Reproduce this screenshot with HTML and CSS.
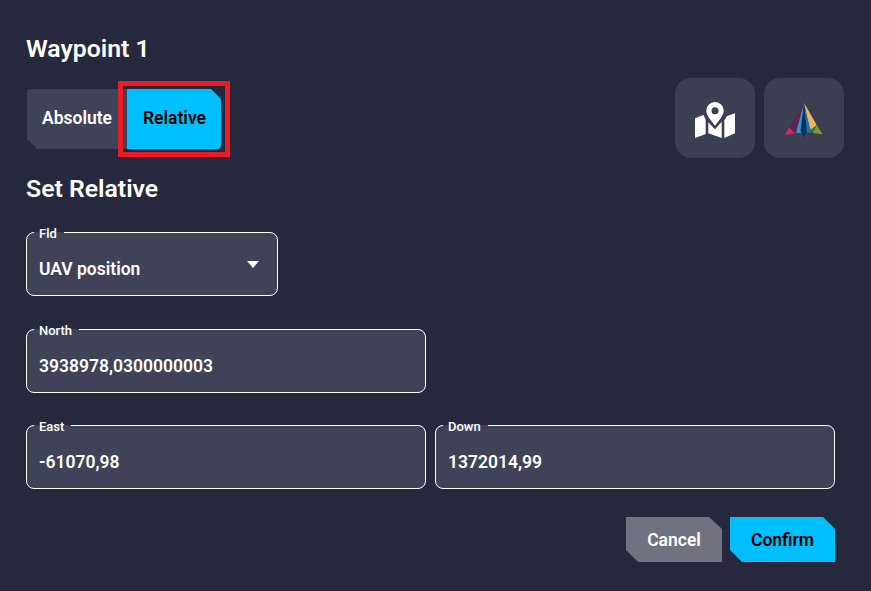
FILE: index.html
```html
<!DOCTYPE HTML>
<html lang="en">
  <head>
    <meta charset="UTF-8">
    <title>Waypoint 1</title>
    <link rel="stylesheet" href="styles.css">
  </head>
  <body>
    <div class="dialogo">
        <h1 class="titulo">Waypoint 1</h1>

        <div class="barra">
            <div class="selector">
                <button class="opcion opcion-absolute">Absolute</button>
                <button class="opcion opcion-relative">Relative</button>
                <div class="marca"></div>
            </div>
            <div class="acciones">
                <div class="icono-caja">
                    <svg width="42" height="40" viewBox="0 -1 42 40">
                        <path fill="#fff" fill-rule="evenodd" d="M21 3a8.700 8.700 0 0 1 8.700 8.700c0 5-5.500 10.500-8.700 15c-3.200-4.500-8.700-10-8.700-15A8.700 8.700 0 0 1 21 3ZM21 8.200a3.500 3.500 0 1 0 0 7a3.500 3.500 0 1 0 0-7Z"/>
                        <path fill="#fff" d="M1 19.300L9.500 16L11.700 21V35L1 39Z"/>
                        <path fill="#fff" d="M14.300 23.300L21 30.300L27.700 22.700V39L14.300 34.300Z"/>
                        <path fill="#fff" d="M30.300 21.500L33 17L41 14.300V34.300L30.300 39Z"/>
                    </svg>
                </div>
                <div class="icono-caja">
                    <svg width="38" height="40" viewBox="0 0 38 40">
                        <polygon fill="#5a2350" points="19,4.700 4,29.700 10,35.300 11,34.700"/>
                        <polygon fill="#d8285e" points="0,37 4,29.700 10,35.300"/>
                        <polygon fill="#f4b45c" points="19,4.700 31.700,27 26,33 22,20"/>
                        <polygon fill="#7f9c2e" points="31.700,27 37.700,36.300 28,35"/>
                        <polygon fill="#2a7f5a" points="25,32 31.700,27 28,35"/>
                        <polygon fill="#2a9bc4" points="19,4.700 11,34.700 16.700,35.300"/>
                        <polygon fill="#1e74a8" points="19,4.700 21.700,33.700 26,35.300"/>
                        <polygon fill="#0e2f66" points="19,4.700 15.500,33 19,39.700 21.500,33.500"/>
                    </svg>
                </div>
            </div>
        </div>

        <h2 class="subtitulo">Set Relative</h2>

        <fieldset class="campo campo-select">
            <legend>Fld</legend>
            <span class="valor">UAV position</span>
            <span class="flecha"></span>
        </fieldset>

        <fieldset class="campo campo-north">
            <legend>North</legend>
            <span class="valor">3938978,0300000003</span>
        </fieldset>

        <div class="fila">
            <fieldset class="campo">
                <legend>East</legend>
                <span class="valor">-61070,98</span>
            </fieldset>
            <fieldset class="campo">
                <legend>Down</legend>
                <span class="valor">1372014,99</span>
            </fieldset>
        </div>

        <div class="botones">
            <button class="boton boton-cancel">Cancel</button>
            <button class="boton boton-confirm">Confirm</button>
        </div>
    </div>
  </body>
</html>
```

FILE: styles.css
```css
html, body {
    padding: 0;
    margin: 0;
    border: 0;
    width: 100%;
    height: 100%;
    overflow: hidden;
    background-color: #26283d;
}

.dialogo {
    padding: 34px 36px 0 26px;
    font-family: Roboto, "Liberation Sans", sans-serif;
    color: #fff;
}

.titulo {
    margin: 0;
    font-size: 24.800px;
    line-height: 29px;
    font-weight: 600;
}

.barra {
    display: flex;
    justify-content: space-between;
    margin-top: 15px;
    margin-right: -9px;
}

.selector {
    position: relative;
    display: flex;
    margin: 11px 0 0 1px;
    height: 60px;
}

.opcion {
    border: none;
    padding: 0 0 2px 0;
    height: 60px;
    font-family: inherit;
    font-size: 17.500px;
    font-weight: 600;
}

.opcion-absolute {
    width: 100px;
    background-color: #404257;
    color: #fff;
    border-radius: 4px 0 0 0;
    clip-path: polygon(0 0, 100% 0, 100% 100%, 10px 100%, 0 50px);
}

.opcion-relative {
    width: 94px;
    padding-left: 1px;
    background-color: #00bfff;
    color: #000;
    border-radius: 0 0 4px 0;
    clip-path: polygon(0 0, 84px 0, 100% 10px, 100% 100%, 0 100%);
}

/* red highlight drawn on top of the screenshot */
.marca {
    position: absolute;
    left: 91px;
    top: -8px;
    width: 102px;
    height: 66px;
    border: 5px solid #ed1c24;
}

.acciones {
    display: flex;
    gap: 9px;
}

.icono-caja {
    display: flex;
    align-items: center;
    justify-content: center;
    width: 80px;
    height: 80px;
    border-radius: 16px;
    background-color: #3c3e52;
}

.subtitulo {
    margin: 17px 0 0 0;
    font-size: 24.800px;
    line-height: 28px;
    font-weight: 600;
}

.campo {
    position: relative;
    box-sizing: border-box;
    width: 400px;
    height: 73px;
    margin: 0;
    padding: 0 12px;
    min-width: 0;
    border: 1px solid #fff;
    border-radius: 8px;
    background-color: #404257;
    display: flex;
    align-items: center;
}

.campo legend {
    margin-left: -5px;
    padding: 4px 7px 1px 5px;
    font-size: 13px;
    line-height: 14px;
    font-weight: 500;
}

.campo-select {
    width: 252px;
    margin-top: 20px;
}

.campo-north {
    margin-top: 24px;
}

.valor {
    font-size: 17.500px;
    font-weight: 600;
}

.flecha {
    position: absolute;
    right: 18px;
    top: 19px;
    border-left: 6.500px solid transparent;
    border-right: 6.500px solid transparent;
    border-top: 7px solid #fff;
}

.fila {
    display: flex;
    gap: 9px;
    margin-top: 23px;
}

.botones {
    display: flex;
    justify-content: flex-end;
    gap: 8px;
    margin-top: 28px;
}

.boton {
    border: none;
    padding: 1px 0 0 0;
    height: 45px;
    font-family: inherit;
    font-size: 17.500px;
    font-weight: 600;
}

.boton-cancel {
    width: 96px;
    background-color: #717280;
    color: #fff;
    clip-path: polygon(0 0, 83px 0, 100% 12px, 100% 100%, 12px 100%, 0 33px);
}

.boton-confirm {
    width: 105px;
    background-color: #00bfff;
    color: #000;
    clip-path: polygon(0 0, 93px 0, 100% 12px, 100% 100%, 12px 100%, 0 33px);
}
```
